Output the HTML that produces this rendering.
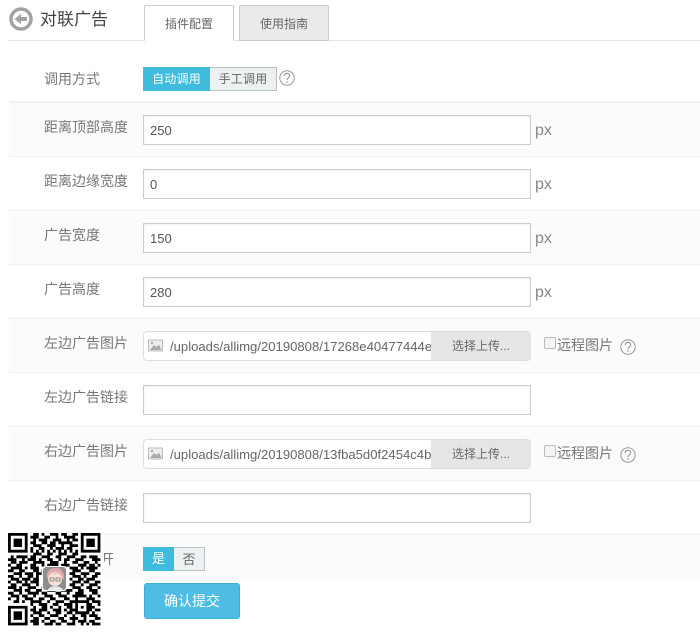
<!DOCTYPE html>
<html><head><meta charset="utf-8"><style>
html,body{margin:0;padding:0;background:#fff}
body{width:700px;height:632px;position:relative;overflow:hidden;font-family:"Liberation Sans","Noto Sans CJK SC",sans-serif;color:#666;font-size:14px}
div,span{position:absolute;box-sizing:border-box;white-space:nowrap}
.row{left:9px;width:691px;height:54px;border-bottom:1px solid #efefef}
.g{background:#fbfbfb}
.lb{left:44px;line-height:20px;font-size:14px;color:#777}
.in{left:143px;width:388px;height:30px;border:1px solid #ccc;background:#fff;box-shadow:inset 0 1px 2px #eee;padding-left:6px;line-height:29px;font-size:13px;color:#555}
.px{left:535px;font-size:16px;color:#888;line-height:20px}
.up{left:143px;width:388px;height:30px;border:1px solid #ddd;border-radius:4px;background:#fff;overflow:hidden}
.up .t{left:26px;top:0;width:261px;overflow:hidden;line-height:29px;font-size:13.1px;color:#666}
.up .b{left:287px;top:0;width:100px;height:28px;background:#e5e5e5;font-size:12px;line-height:29px;padding-left:21px;color:#666}
.up svg{position:absolute;left:4px;top:7px}
.cb{left:544px;width:12px;height:12px;border:1px solid #bbb;border-radius:2px;background:#f4f4f4}
.rt{left:557px;font-size:14px;line-height:20px;color:#777}
.q{position:absolute}
.tab{top:5px;width:90px;height:36px;border:1px solid #ccc;border-radius:2px 2px 0 0;text-align:center;font-size:12px;line-height:37px;color:#666}
</style></head><body>
<div class="row" style="top:48px"></div>
<div class="row g" style="top:102px;border-top:1px solid #efefef;height:55px"></div>
<div class="row" style="top:157px;height:54px"></div>
<div class="row g" style="top:211px"></div>
<div class="row" style="top:265px"></div>
<div class="row g" style="top:319px"></div>
<div class="row" style="top:373px"></div>
<div class="row g" style="top:427px"></div>
<div class="row" style="top:481px"></div>
<div class="g" style="left:9px;top:535px;width:691px;height:46px"></div>

<div style="left:9px;top:40px;width:691px;height:1px;background:#e5e5e5"></div>
<svg class="q" style="left:9px;top:7px" width="24" height="24" viewBox="0 0 24 24"><circle cx="12" cy="12" r="10" fill="#fff" stroke="#a2a2a2" stroke-width="3.500"/><path d="M5.500 12L12 6.800V10H18V14H12V17.200Z" fill="#a2a2a2"/></svg>
<div style="left:40px;top:8px;font-size:17px;line-height:24px;color:#444">对联广告</div>
<div class="tab" style="left:144px;background:#fff;border-bottom:1px solid #fff">插件配置</div>
<div class="tab" style="left:239px;background:#ebebeb">使用指南</div>

<div class="lb" style="top:69px">调用方式</div>
<div style="left:143px;top:67px;width:67px;height:24px;background:#3fbbdd;color:#fff;font-size:12px;letter-spacing:.2px;line-height:24px;text-align:center">自动调用</div>
<div style="left:210px;top:67px;width:67px;height:24px;background:#eef1f2;border:1px solid #b9bfc4;border-left:0;color:#666;font-size:12px;letter-spacing:.2px;line-height:23px;text-align:center">手工调用</div>
<svg class="q" style="left:279px;top:70px" width="16" height="16" viewBox="0 0 16 16"><circle cx="8" cy="8" r="7.200" fill="none" stroke="#999" stroke-width="1"/><path d="M5.300 6C5.400 4.200 6.700 3.400 8 3.400C9.600 3.400 10.700 4.500 10.700 5.800C10.700 7.600 8 7.800 8 10" fill="none" stroke="#999" stroke-width="1.200"/><rect x="7.300" y="11.300" width="1.400" height="1.400" fill="#999"/></svg>

<div class="lb" style="top:117px">距离顶部高度</div>
<div class="in" style="top:115px">250</div><div class="px" style="top:121px">px</div>
<div class="lb" style="top:171px">距离边缘宽度</div>
<div class="in" style="top:169px">0</div><div class="px" style="top:175px">px</div>
<div class="lb" style="top:225px">广告宽度</div>
<div class="in" style="top:223px">150</div><div class="px" style="top:229px">px</div>
<div class="lb" style="top:279px">广告高度</div>
<div class="in" style="top:277px">280</div><div class="px" style="top:283px">px</div>

<div class="lb" style="top:333px">左边广告图片</div>
<div class="up" style="top:331px"><svg width="15" height="13" viewBox="0 0 15 13"><rect x=".5" y="1" width="14" height="11" fill="#eee" stroke="#bbb"/><path d="M2 11L6 6L8.500 8L11 5.500L13.500 11Z" fill="#aaa"/><circle cx="4" cy="4" r="1.200" fill="#aaa"/></svg><div class="t">/uploads/allimg/20190808/17268e40477444e</div><div class="b">选择上传...</div></div>
<div class="cb" style="top:337px"></div><div class="rt" style="top:335px">远程图片</div>
<svg class="q" style="left:620px;top:339px" width="16" height="16" viewBox="0 0 16 16"><circle cx="8" cy="8" r="7.200" fill="none" stroke="#999" stroke-width="1"/><path d="M5.300 6C5.400 4.200 6.700 3.400 8 3.400C9.600 3.400 10.700 4.500 10.700 5.800C10.700 7.600 8 7.800 8 10" fill="none" stroke="#999" stroke-width="1.200"/><rect x="7.300" y="11.300" width="1.400" height="1.400" fill="#999"/></svg>

<div class="lb" style="top:387px">左边广告链接</div>
<div class="in" style="top:385px"></div>

<div class="lb" style="top:441px">右边广告图片</div>
<div class="up" style="top:439px"><svg width="15" height="13" viewBox="0 0 15 13"><rect x=".5" y="1" width="14" height="11" fill="#eee" stroke="#bbb"/><path d="M2 11L6 6L8.500 8L11 5.500L13.500 11Z" fill="#aaa"/><circle cx="4" cy="4" r="1.200" fill="#aaa"/></svg><div class="t">/uploads/allimg/20190808/13fba5d0f2454c4b</div><div class="b">选择上传...</div></div>
<div class="cb" style="top:445px"></div><div class="rt" style="top:443px">远程图片</div>
<svg class="q" style="left:620px;top:447px" width="16" height="16" viewBox="0 0 16 16"><circle cx="8" cy="8" r="7.200" fill="none" stroke="#999" stroke-width="1"/><path d="M5.300 6C5.400 4.200 6.700 3.400 8 3.400C9.600 3.400 10.700 4.500 10.700 5.800C10.700 7.600 8 7.800 8 10" fill="none" stroke="#999" stroke-width="1.200"/><rect x="7.300" y="11.300" width="1.400" height="1.400" fill="#999"/></svg>

<div class="lb" style="top:495px">右边广告链接</div>
<div class="in" style="top:493px"></div>

<div class="lb" style="top:549px">新窗口打开</div>
<div style="left:143px;top:547px;width:31px;height:24px;background:#3fbbdd;color:#fff;font-size:13px;line-height:24px;text-align:center">是</div>
<div style="left:174px;top:547px;width:31px;height:24px;background:#eef1f2;border:1px solid #b9bfc4;border-left:0;color:#666;font-size:13px;line-height:23px;text-align:center">否</div>
<div style="left:144px;top:583px;width:96px;height:36px;background:#4dbde6;border:1px solid #3aaed8;border-radius:3px;color:#fff;font-size:14px;line-height:34px;text-align:center">确认提交</div>

<svg class="q" style="left:4px;top:529px" width="100" height="100" viewBox="-1.430 -1.430 35.710 35.710">
<rect x="-1.430" y="-1.430" width="35.710" height="35.710" fill="#fff"/>
<path stroke="#000" stroke-width="1" fill="none" d="
M0 .5h7M9 .5h2M12 .5h1M15 .5h3M19 .5h2M23 .5h2M26 .5h7
M0 1.500h1M6 1.500h1M8 1.500h3M13 1.500h2M17 1.500h1M20 1.500h4M26 1.500h1M32 1.500h1
M0 2.500h1M2 2.500h3M6 2.500h1M9 2.500h1M11 2.500h3M16 2.500h3M21 2.500h1M23 2.500h2M26 2.500h1M28 2.500h3M32 2.500h1
M0 3.500h1M2 3.500h3M6 3.500h1M8 3.500h2M12 3.500h2M15 3.500h2M18 3.500h5M26 3.500h1M28 3.500h3M32 3.500h1
M0 4.500h1M2 4.500h3M6 4.500h1M9 4.500h3M14 4.500h3M19 4.500h1M22 4.500h3M26 4.500h1M28 4.500h3M32 4.500h1
M0 5.500h1M6 5.500h1M8 5.500h1M11 5.500h2M15 5.500h1M17 5.500h3M21 5.500h2M26 5.500h1M32 5.500h1
M0 6.500h7M8 6.500h1M10 6.500h1M12 6.500h1M14 6.500h1M16 6.500h1M18 6.500h1M20 6.500h1M22 6.500h1M24 6.500h1M26 6.500h7
M9 7.500h3M14 7.500h2M18 7.500h3M23 7.500h2
M1 8.500h1M3 8.500h4M8 8.500h2M12 8.500h3M17 8.500h2M21 8.500h3M26 8.500h2M29 8.500h3
M0 9.500h3M5 9.500h1M7 9.500h3M11 9.500h1M14 9.500h2M18 9.500h1M20 9.500h2M24 9.500h3M30 9.500h3
M1 10.500h2M4 10.500h3M9 10.500h4M15 10.500h3M20 10.500h1M23 10.500h2M27 10.500h2M31 10.500h1
M0 11.500h1M3 11.500h2M8 11.500h2M12 11.500h1M14 11.500h4M19 11.500h3M25 11.500h3M29 11.500h2M32 11.500h1
M1 12.500h4M6 12.500h1M8 12.500h3M13 12.500h2M18 12.500h2M22 12.500h3M26 12.500h1M28 12.500h4
M0 13.500h2M4 13.500h2M9 13.500h2M12 13.500h3M20 13.500h1M23 13.500h3M29 13.500h2
M2 14.500h3M6 14.500h3M10 14.500h2M22 14.500h2M26 14.500h3M31 14.500h2
M0 15.500h2M4 15.500h1M7 15.500h2M10 15.500h1M23 15.500h3M27 15.500h1M30 15.500h2
M1 16.500h3M5 16.500h3M9 16.500h2M22 16.500h1M25 16.500h2M28 16.500h3
M0 17.500h1M3 17.500h2M6 17.500h1M8 17.500h3M23 17.500h3M27 17.500h2M31 17.500h2
M1 18.500h2M5 18.500h3M10 18.500h1M22 18.500h2M26 18.500h1M29 18.500h3
M0 19.500h3M4 19.500h1M7 19.500h3M12 19.500h3M18 19.500h2M23 19.500h3M28 19.500h2M32 19.500h1
M2 20.500h3M6 20.500h2M10 20.500h2M14 20.500h3M19 20.500h4M25 20.500h2M29 20.500h3
M0 21.500h2M4 21.500h1M7 21.500h4M12 21.500h2M17 21.500h2M21 21.500h1M24 21.500h3M30 21.500h2
M1 22.500h3M5 22.500h2M9 22.500h1M13 22.500h3M18 22.500h3M23 22.500h5M29 22.500h1M32 22.500h1
M0 23.500h1M3 23.500h1M6 23.500h3M11 23.500h2M15 23.500h2M20 23.500h2M24 23.500h1M28 23.500h3
M2 24.500h2M5 24.500h1M8 24.500h4M14 24.500h1M17 24.500h3M22 24.500h7M30 24.500h3
M8 25.500h1M11 25.500h3M16 25.500h2M20 25.500h3M24 25.500h1M28 25.500h2M32 25.500h1
M0 26.500h7M9 26.500h1M12 26.500h2M15 26.500h1M18 26.500h1M21 26.500h2M24 26.500h1M26 26.500h1M28 26.500h3
M0 27.500h1M6 27.500h1M8 27.500h2M11 27.500h3M16 27.500h3M20 27.500h1M22 27.500h3M28 27.500h2M31 27.500h2
M0 28.500h1M2 28.500h3M6 28.500h1M9 28.500h3M14 28.500h1M17 28.500h2M21 28.500h2M24 28.500h5M30 28.500h1
M0 29.500h1M2 29.500h3M6 29.500h1M8 29.500h1M11 29.500h2M15 29.500h3M20 29.500h1M23 29.500h1M26 29.500h2M29 29.500h3
M0 30.500h1M2 30.500h3M6 30.500h1M9 30.500h2M13 30.500h2M18 30.500h2M22 30.500h3M27 30.500h1M31 30.500h2
M0 31.500h1M6 31.500h1M8 31.500h3M12 31.500h1M15 31.500h2M19 31.500h2M23 31.500h1M25 31.500h3M29 31.500h2
M0 32.500h7M9 32.500h2M13 32.500h3M17 32.500h2M21 32.500h3M26 32.500h1M28 32.500h1M30 32.500h3"/>
</svg>
<svg class="q" style="left:42px;top:566px" width="25" height="25" viewBox="0 0 25 25"><rect width="25" height="25" rx="3" fill="#fff"/><rect x="1" y="1" width="23" height="23" rx="3" fill="#8e8e8e"/><path d="M5 12C4 4 9 2 14 2C20 2 23 7 22 14L17 9H9Z" fill="#e3a6a9"/><ellipse cx="13" cy="13" rx="7" ry="7" fill="#f6e3d8"/><path d="M6 11C8 6 17 6 20 11L17 8H9Z" fill="#e3a6a9"/><rect x="8" y="12" width="4" height="3" fill="none" stroke="#666" stroke-width=".7"/><rect x="14" y="12" width="4" height="3" fill="none" stroke="#666" stroke-width=".7"/><path d="M6 24C7 19 19 19 21 24Z" fill="#e8e8e8"/></svg>
</body></html>
